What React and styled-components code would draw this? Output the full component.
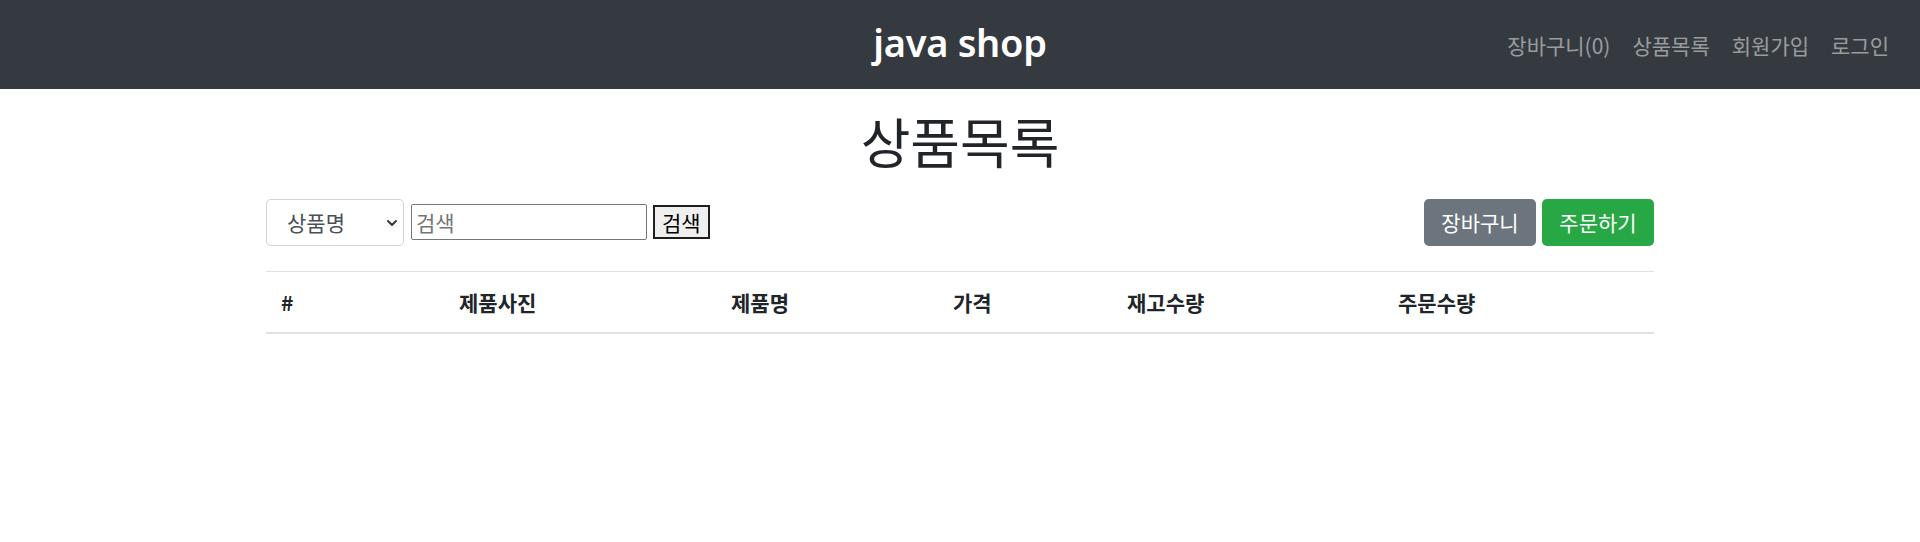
import React from 'react';
import styled, { createGlobalStyle } from 'styled-components';
import { ChevronDown } from 'lucide-react';

const GlobalStyle = createGlobalStyle`
  body {
    margin: 0;
    background: #fff;
    color: #212529;
    font-family: "Noto Sans", "Noto Sans CJK KR", sans-serif;
  }
`;

const StyledHeader = styled.header`
  height: 89px;
  background: #343a40;
  display: grid;
  grid-template-columns: 1fr auto 1fr;
  align-items: center;
  padding: 0 31px;
`;

const StyledBrand = styled.h2`
  grid-column: 2;
  margin: 0;
  color: #fff;
  font-size: 38px;
  font-weight: 600;
  letter-spacing: -0.3px;
  line-height: 1.2;
  padding-bottom: 4px;
`;

const StyledNav = styled.nav`
  grid-column: 3;
  justify-self: end;
  display: flex;
  gap: 22px;
`;

const StyledNavLink = styled.a`
  color: rgba(255, 255, 255, 0.5);
  font-size: 21px;
  text-decoration: none;
  font-family: "Noto Sans CJK KR", sans-serif;
`;

const StyledContainer = styled.main`
  width: 1388px;
  margin: 0 auto;
`;

const StyledTitle = styled.h1`
  margin: 20px 0 0;
  text-align: center;
  font-size: 54px;
  font-weight: 400;
  line-height: 1.2;
  font-family: "Noto Sans CJK KR", sans-serif;
  color: #212529;
`;

const StyledToolbar = styled.div`
  margin-top: 25px;
  display: flex;
  justify-content: space-between;
  align-items: center;
`;

const StyledSearch = styled.form`
  display: flex;
  align-items: center;
`;

const StyledSelectBox = styled.div`
  position: relative;
  width: 138px;
  height: 47px;
`;

const StyledSelect = styled.select`
  appearance: none;
  width: 100%;
  height: 100%;
  border: 1px solid #ced4da;
  border-radius: 5px;
  background: #fff;
  padding: 0 0 0 20px;
  font-size: 21px;
  color: #495057;
  font-family: "Noto Sans CJK KR", sans-serif;
`;

const StyledChevron = styled(ChevronDown)`
  position: absolute;
  right: 4px;
  top: 16px;
  pointer-events: none;
  color: #343a40;
`;

const StyledInput = styled.input`
  box-sizing: border-box;
  margin-left: 7px;
  width: 236px;
  height: 36px;
  border: 1px solid #767676;
  border-radius: 2px;
  padding: 0 4px;
  font-size: 21px;
  font-family: "Noto Sans CJK KR", sans-serif;

  &::placeholder {
    color: #757575;
  }
`;

const StyledSearchButton = styled.button`
  box-sizing: border-box;
  margin-left: 6px;
  height: 34px;
  padding: 0 7px;
  border: 2px solid #1e1e1e;
  background: #efefef;
  color: #000;
  font-size: 21px;
  font-family: "Noto Sans CJK KR", sans-serif;
  line-height: 1;
`;

const StyledActions = styled.div`
  display: flex;
  gap: 6px;
`;

const StyledButton = styled.button`
  width: 112px;
  height: 47px;
  border: none;
  border-radius: 5px;
  background: ${({ variant }) => (variant === 'success' ? '#28a745' : '#6c757d')};
  color: #fff;
  font-size: 21px;
  font-family: "Noto Sans CJK KR", sans-serif;
`;

const StyledTable = styled.table`
  margin-top: 25px;
  width: 100%;
  border-collapse: collapse;
  table-layout: fixed;
`;

const StyledTh = styled.th`
  box-sizing: border-box;
  text-align: left;
  padding: 0 15px;
  height: 62px;
  border-top: 1px solid #dee2e6;
  border-bottom: 2.5px solid #dee2e6;
  font-size: 21px;
  font-weight: 700;
  font-family: "Noto Sans CJK KR", sans-serif;
  color: #212529;
  width: ${({ $w }) => $w};
`;

const columns = [
  { label: '#', w: '178px' },
  { label: '제품사진', w: '272px' },
  { label: '제품명', w: '222px' },
  { label: '가격', w: '174px' },
  { label: '재고수량', w: '271px' },
  { label: '주문수량', w: 'auto' },
];

const App = () => {
  return (
    <>
      <GlobalStyle />
      <StyledHeader>
        <StyledBrand>java shop</StyledBrand>
        <StyledNav>
          <StyledNavLink href="#">장바구니(0)</StyledNavLink>
          <StyledNavLink href="#">상품목록</StyledNavLink>
          <StyledNavLink href="#">회원가입</StyledNavLink>
          <StyledNavLink href="#">로그인</StyledNavLink>
        </StyledNav>
      </StyledHeader>
      <StyledContainer>
        <StyledTitle>상품목록</StyledTitle>
        <StyledToolbar>
          <StyledSearch onSubmit={(e) => e.preventDefault()}>
            <StyledSelectBox>
              <StyledSelect defaultValue="name">
                <option value="name">상품명</option>
                <option value="price">가격</option>
              </StyledSelect>
              <StyledChevron size={16} strokeWidth={3} />
            </StyledSelectBox>
            <StyledInput placeholder="검색" />
            <StyledSearchButton>검색</StyledSearchButton>
          </StyledSearch>
          <StyledActions>
            <StyledButton>장바구니</StyledButton>
            <StyledButton variant="success">주문하기</StyledButton>
          </StyledActions>
        </StyledToolbar>
        <StyledTable>
          <thead>
            <tr>
              {columns.map((c) => (
                <StyledTh key={c.label} $w={c.w}>
                  {c.label}
                </StyledTh>
              ))}
            </tr>
          </thead>
        </StyledTable>
      </StyledContainer>
    </>
  );
};

export default App;
